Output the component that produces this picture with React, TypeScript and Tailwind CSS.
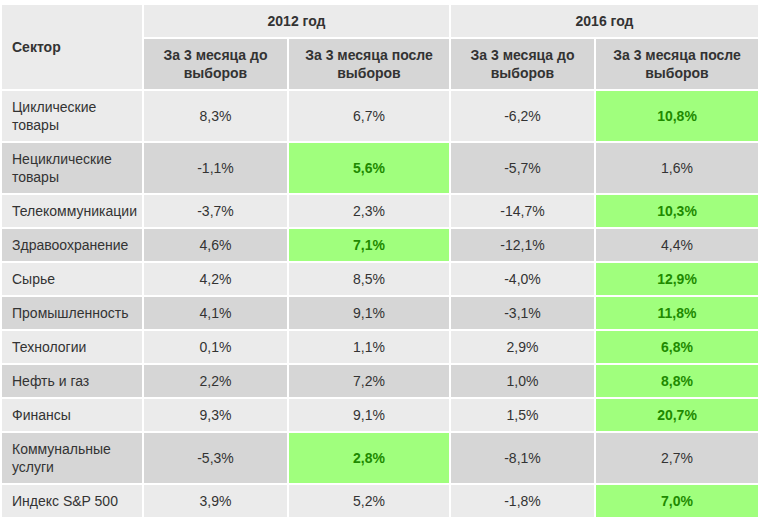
const rows: [string, string, string, string, string, number[]][] = [
  ["Циклические товары", "8,3%", "6,7%", "-6,2%", "10,8%", [4]],
  ["Нециклические товары", "-1,1%", "5,6%", "-5,7%", "1,6%", [2]],
  ["Телекоммуникации", "-3,7%", "2,3%", "-14,7%", "10,3%", [4]],
  ["Здравоохранение", "4,6%", "7,1%", "-12,1%", "4,4%", [2]],
  ["Сырье", "4,2%", "8,5%", "-4,0%", "12,9%", [4]],
  ["Промышленность", "4,1%", "9,1%", "-3,1%", "11,8%", [4]],
  ["Технологии", "0,1%", "1,1%", "2,9%", "6,8%", [4]],
  ["Нефть и газ", "2,2%", "7,2%", "1,0%", "8,8%", [4]],
  ["Финансы", "9,3%", "9,1%", "1,5%", "20,7%", [4]],
  ["Коммунальные услуги", "-5,3%", "2,8%", "-8,1%", "2,7%", [2]],
  ["Индекс S&P 500", "3,9%", "5,2%", "-1,8%", "7,0%", [4]],
];

export default function App() {
  return (
    <div className="bg-white pt-[3px] font-['Liberation_Sans',Arial,sans-serif] text-[14px] leading-[18px] text-[#333]">
      <table className="w-[760px] table-fixed border-separate border-spacing-[2px]">
        <colgroup>
          <col className="w-[140px]" />
          <col className="w-[143px]" />
          <col className="w-[160px]" />
          <col className="w-[143px]" />
          <col className="w-[162px]" />
        </colgroup>
        <thead>
          <tr className="bg-[#ebebeb]">
            <th rowSpan={2} className="px-[10px] py-[7px] text-left font-bold">
              Сектор
            </th>
            <th colSpan={2} className="px-[10px] py-[7px] text-center font-bold">
              2012 год
            </th>
            <th colSpan={2} className="px-[10px] py-[7px] text-center font-bold">
              2016 год
            </th>
          </tr>
          <tr className="bg-[#d6d6d6]">
            <th className="px-[10px] py-[7px] text-center font-bold">За 3 месяца до выборов</th>
            <th className="px-[10px] py-[7px] text-center font-bold">За 3 месяца после выборов</th>
            <th className="px-[10px] py-[7px] text-center font-bold">За 3 месяца до выборов</th>
            <th className="px-[10px] py-[7px] text-center font-bold">За 3 месяца после выборов</th>
          </tr>
        </thead>
        <tbody>
          {rows.map((r, i) => (
            <tr key={r[0]} className={i % 2 === 0 ? "bg-[#ebebeb]" : "bg-[#d6d6d6]"}>
              <td className="px-[10px] py-[7px] text-left">{r[0]}</td>
              {[r[1], r[2], r[3], r[4]].map((v, j) =>
                r[5].includes(j + 1) ? (
                  <td key={j} className="bg-[#a0ff7d] px-[10px] py-[7px] text-center font-bold text-[#1e8a00]">
                    {v}
                  </td>
                ) : (
                  <td key={j} className="px-[10px] py-[7px] text-center">
                    {v}
                  </td>
                )
              )}
            </tr>
          ))}
        </tbody>
      </table>
    </div>
  );
}
